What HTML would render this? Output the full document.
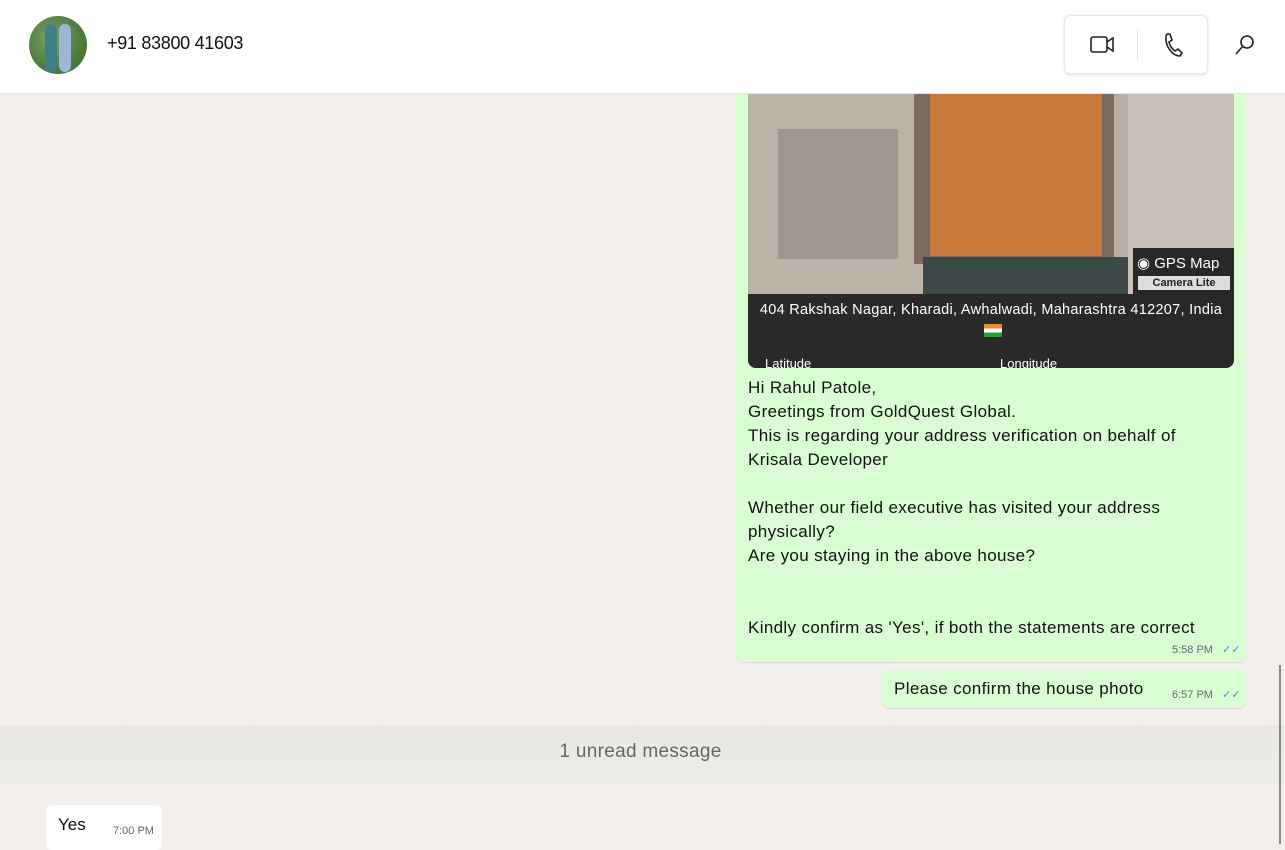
<!DOCTYPE html>
<html><head><meta charset="utf-8"><style>
*{margin:0;padding:0;box-sizing:border-box}
body{width:1285px;height:844px;overflow:hidden;background:#f2efec;font-family:"Liberation Sans",sans-serif;position:relative;color:#111}
.hdr{position:absolute;left:0;top:0;width:1285px;height:94px;background:#fff;border-bottom:1px solid #e3e3e3;z-index:5}
.av{position:absolute;left:29px;top:16px;width:58px;height:58px;border-radius:50%;background:radial-gradient(circle at 40% 40%,#7fa36a,#4d7a3c 60%,#3c6a32);overflow:hidden}
.av i{position:absolute;top:8px;width:12px;height:48px;border-radius:6px}
.name{position:absolute;left:107px;top:33px;font-size:18px;color:#111;letter-spacing:-0.3px}
.btns{position:absolute;left:1064px;top:15px;width:144px;height:59px;border:1px solid #e6e6e6;border-radius:6px;box-shadow:0 1px 3px rgba(0,0,0,.12);background:#fff}
.sep{position:absolute;left:72px;top:13px;width:1px;height:32px;background:#e3e3e3}
.bub{position:absolute;background:#d9fdd3;border-radius:8px;box-shadow:0 1px 1px rgba(0,0,0,.1)}
.img{position:absolute;left:748px;top:94px;width:486px;height:274px;border-radius:0 0 8px 8px;overflow:hidden;background:#b9aea4}
.txt{position:absolute;left:748px;top:376px;font-size:17px;line-height:24px;color:#111;letter-spacing:0.35px}
.tm{position:absolute;font-size:11px;color:#667}
.band{position:absolute;left:0;top:725px;width:1285px;height:60px;background:linear-gradient(#e9e7e4,#efedea);}
</style></head><body>
<div class="hdr">
<div class="av"><i style="left:16px;background:#3f7f88"></i><i style="left:30px;background:#9fb5d6"></i></div>
<div class="name">+91 83800 41603</div>
<div class="btns">
<svg style="position:absolute;left:24px;top:18px" width="28" height="22" viewBox="0 0 28 22" fill="none" stroke="#222" stroke-width="1.6"><rect x="2" y="3" width="16" height="15" rx="2"/><path d="M18 8l6-4v13l-6-4"/></svg>
<div class="sep"></div>
<svg style="position:absolute;left:96px;top:15px" width="24" height="28" viewBox="0 0 24 28" fill="none" stroke="#222" stroke-width="1.6"><path d="M6 3l3 0 2 6-3 2c1 4 3 7 6 9l3-2 4 4-2 3c-8 0-15-10-14-20z"/></svg>
</div>
<svg style="position:absolute;left:1233px;top:33px" width="24" height="24" viewBox="0 0 24 24" fill="none" stroke="#222" stroke-width="1.6"><circle cx="14" cy="9" r="6"/><path d="M10 13l-7 8"/></svg>
</div>
<div class="bub" style="left:736px;top:80px;width:510px;height:582px"></div>
<div class="img">
<div style="position:absolute;left:0;top:0;width:180px;height:210px;background:#bcb2a8"></div>
<div style="position:absolute;left:30px;top:35px;width:120px;height:130px;background:#8a8480;opacity:.6"></div>
<div style="position:absolute;left:166px;top:0;width:200px;height:170px;background:#7a6a60"></div>
<div style="position:absolute;left:182px;top:0;width:172px;height:162px;background:#c87a3c"></div>
<div style="position:absolute;left:175px;top:163px;width:210px;height:38px;background:#3d4848"></div>
<div style="position:absolute;left:380px;top:0;width:106px;height:200px;background:#c9c1b8"></div>
<div style="position:absolute;left:385px;top:154px;width:101px;height:46px;background:#2a2826"></div>
<div style="position:absolute;left:389px;top:160px;color:#fff;font-size:15px">◉ GPS Map</div>
<div style="position:absolute;left:390px;top:182px;width:92px;height:14px;background:#ddd;color:#222;font-size:11px;font-weight:bold;text-align:center;line-height:14px">Camera Lite</div>
<div style="position:absolute;left:0;top:200px;width:486px;height:74px;background:#2b2927"></div>
<div style="position:absolute;left:0;top:208px;width:486px;text-align:center;color:#fff;font-size:14.5px;letter-spacing:0.3px">404 Rakshak Nagar, Kharadi, Awhalwadi, Maharashtra 412207, India</div>
<div style="position:absolute;left:236px;top:230px;width:18px;height:13px;background:linear-gradient(#f08a2c 33%,#fff 33% 66%,#2a9a3a 66%)"></div>
<div style="position:absolute;left:17px;top:262px;color:#fff;font-size:13px">Latitude</div>
<div style="position:absolute;left:252px;top:262px;color:#fff;font-size:13px">Longitude</div>
</div>
<div class="txt">Hi Rahul Patole,<br>Greetings from GoldQuest Global.<br>This is regarding your address verification on behalf of<br>Krisala Developer<br><br>Whether our field executive has visited your address<br>physically?<br>Are you staying in the above house?<br><br><br>Kindly confirm as 'Yes', if both the statements are correct</div>
<div class="tm" style="left:1172px;top:643px">5:58 PM <span style="color:#3a8ee6;margin-left:6px">✓✓</span></div>
<div class="bub" style="left:882px;top:670px;width:364px;height:38px"></div>
<div style="position:absolute;left:894px;top:679px;font-size:17px;letter-spacing:0.35px">Please confirm the house photo</div>
<div class="tm" style="left:1172px;top:688px">6:57 PM <span style="color:#3a8ee6;margin-left:6px">✓✓</span></div>
<div class="band"></div>
<div style="position:absolute;left:0;top:741px;width:1285px;text-align:center;font-size:19px;color:#666;padding-right:4px;letter-spacing:0.3px">1 unread message</div>
<div style="position:absolute;left:46px;top:805px;width:116px;height:45px;background:#fff;border-radius:6px"></div>
<div style="position:absolute;left:58px;top:815px;font-size:17px">Yes</div>
<div class="tm" style="left:113px;top:825px">7:00 PM</div>
<div style="position:absolute;left:1279px;top:665px;width:2px;height:179px;background:#888"></div>
</body></html>
